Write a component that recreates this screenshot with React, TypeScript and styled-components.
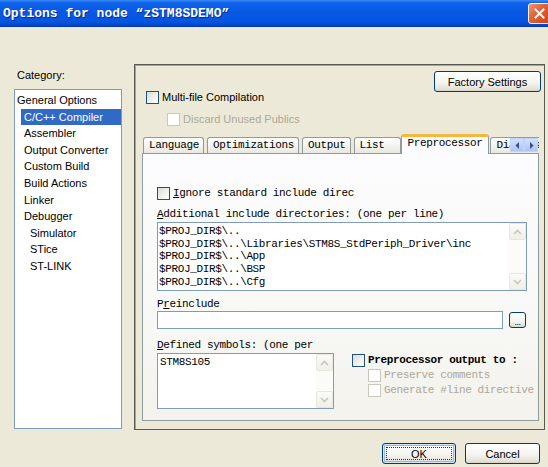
import React from "react";
import styled, { createGlobalStyle, css } from "styled-components";

const GlobalStyle = createGlobalStyle`
  html, body { margin: 0; padding: 0; background: #ece9d8; }
  body { font-family: "Liberation Sans", Arial, sans-serif; font-size: 11px; color: #000; }
  * { box-sizing: border-box; }
`;

const mono = css`
  font-family: "Liberation Mono", "Courier New", monospace;
  font-size: 11px;
  letter-spacing: -0.36px;
`;

const Window = styled.div`
  width: 548px;
  height: 467px;
  overflow: hidden;
  background: #ece9d8;
  display: flex;
  flex-direction: column;
`;

const TitleBar = styled.div`
  height: 27px;
  flex: none;
  display: flex;
  align-items: center;
  padding-left: 3px;
  background: linear-gradient(
    to bottom,
    #3d8bf7 0%,
    #0f63ea 10%,
    #0758e4 45%,
    #0555e2 80%,
    #0445c4 95%,
    #03359e 100%
  );
`;

const TitleText = styled.span`
  font-family: "Liberation Mono", "Courier New", monospace;
  font-weight: bold;
  font-size: 13px;
  letter-spacing: 0px;
  color: #fff;
  text-shadow: 1px 1px 0 #0a2a8c;
  white-space: pre;
`;

const CloseButton = styled.div`
  margin-left: auto;
  margin-right: -2px;
  width: 22px;
  height: 21px;
  border: 1px solid #f4f4f4;
  border-radius: 3px;
  background: linear-gradient(135deg, #f0967a 0%, #e2643b 40%, #c9441b 100%);
  display: flex;
  align-items: center;
  justify-content: center;
`;

const Main = styled.div`
  display: flex;
  gap: 12px;
  margin-top: 37px;
  padding-left: 14px;
  height: 366px;
  flex: none;
`;

const LeftColumn = styled.div`
  width: 108px;
  display: flex;
  flex-direction: column;
`;

const CategoryLabel = styled.div`
  margin-top: 5px;
  line-height: 13px;
  height: 13px;
  padding-left: 3px;
`;

const ListBox = styled.div`
  margin-top: 7px;
  height: 340px;
  border: 1px solid #7f9db9;
  background: #fff;
  padding-top: 2px;
`;

const ListItem = styled.div<{ $level: number; $selected?: boolean }>`
  height: 16.6px;
  line-height: 16.6px;
  margin-left: ${(p) => [0, 6, 12][p.$level]}px;
  padding-left: ${(p) => (p.$level === 0 ? 2 : 3)}px;
  white-space: nowrap;
  ${(p) =>
    p.$selected &&
    css`
      background: #316ac5;
      color: #fff;
    `}
`;

const Group = styled.div`
  width: 411px;
  height: 366px;
  border: 1px solid #5a5a55;
  box-shadow: inset 1px 1px 0 #a7a597;
  padding: 6px 5px 8px 7px;
  display: flex;
  flex-direction: column;
`;

const Header = styled.div`
  display: grid;
  grid-template-columns: 1fr auto;
  align-items: start;
`;

const HeaderChecks = styled.div`
  padding: 20px 0 0 4px;
  display: flex;
  flex-direction: column;
`;

const CheckRow = styled.label<{ $indent?: number; $top?: number; $disabled?: boolean }>`
  display: flex;
  align-items: center;
  gap: 3px;
  height: 13px;
  line-height: 13px;
  margin-left: ${(p) => p.$indent ?? 0}px;
  margin-top: ${(p) => p.$top ?? 0}px;
  color: ${(p) => (p.$disabled ? "#aca899" : "#000")};
  white-space: nowrap;
`;

const CheckBox = styled.span<{ $disabled?: boolean }>`
  width: 13px;
  height: 13px;
  flex: none;
  border: 1px solid ${(p) => (p.$disabled ? "#cac8bb" : "#1c5180")};
  background: ${(p) =>
    p.$disabled ? "#fff" : "linear-gradient(135deg, #dcdcd6 0%, #f2f2ee 60%, #ffffff 100%)"};
`;

const MonoText = styled.span<{ $bold?: boolean }>`
  ${mono}
  font-weight: ${(p) => (p.$bold ? "bold" : "normal")};
`;

const PushButton = styled.button<{ $w: number; $h: number; $default?: boolean }>`
  position: relative;
  width: ${(p) => p.$w}px;
  height: ${(p) => p.$h}px;
  padding: 0;
  border: 1px solid #003c74;
  border-radius: 3px;
  background: linear-gradient(to bottom, #ffffff 0%, #f5f4ef 55%, #e4e2d8 90%, #d6d0c5 100%);
  font-family: "Liberation Sans", Arial, sans-serif;
  font-size: 11px;
  color: #000;
  ${(p) =>
    p.$default &&
    css`
      box-shadow: inset 0 0 0 1px #cee7ff, inset 0 0 0 2px #98b8ea;
      &::after {
        content: "";
        position: absolute;
        inset: 3px;
        border: 1px dotted #333;
      }
    `}
`;

const FactoryButton = styled(PushButton)`
  margin-right: -2px;
`;

const TabStrip = styled.div`
  position: relative;
  z-index: 1;
  display: flex;
  align-items: flex-end;
  gap: 3px;
  height: 20px;
  margin-top: 8px;
  margin-bottom: -1px;
  padding-left: 1px;
  overflow: hidden;
  flex: none;
`;

const Tab = styled.div<{ $active?: boolean }>`
  ${mono}
  flex: none;
  min-width: 47px;
  height: 16px;
  margin-bottom: 1px;
  padding: 0 4px 0 5px;
  line-height: 15px;
  white-space: nowrap;
  border: 1px solid #919b9c;
  border-bottom: none;
  border-radius: 3px 3px 0 0;
  background: linear-gradient(to bottom, #ffffff 0%, #f4f4f0 50%, #e8e7e0 100%);
  ${(p) =>
    p.$active &&
    css`
      height: 20px;
      margin: 0 -2px 0 -3px;
      padding: 0 6px;
      line-height: 12px;
      border-top: 3px solid #f5b83c;
      background: #fcfcfe;
    `}
`;

const TabScroller = styled.div`
  position: absolute;
  right: 1px;
  top: 4px;
  display: flex;
`;

const TabScrollButton = styled.div`
  width: 14px;
  height: 14px;
  display: flex;
  align-items: center;
  justify-content: center;
  background: linear-gradient(to bottom, #d3e0fd 0%, #bccffb 60%, #aec4f6 100%);
  border: 1px solid #c2d3fa;
`;

const TabPage = styled.div`
  flex: 1;
  border: 1px solid #919b9c;
  background: linear-gradient(to bottom, #fcfcfe 0%, #f8f8f6 60%, #f3f2ec 100%);
  padding: 33px 0 0 14px;
  display: flex;
  flex-direction: column;
`;

const FieldLabel = styled.div<{ $top: number }>`
  ${mono}
  line-height: 12px;
  height: 12px;
  margin-top: ${(p) => p.$top}px;
  white-space: nowrap;
`;

const TextBox = styled.div<{ $w: number; $h: number; $top?: number }>`
  width: ${(p) => p.$w}px;
  height: ${(p) => p.$h}px;
  margin-top: ${(p) => p.$top ?? 0}px;
  border: 1px solid #7f9db9;
  background: #fff;
  display: flex;
  flex: none;
`;

const TextLines = styled.div<{ $padLeft?: number }>`
  ${mono}
  flex: 1;
  padding: 2px 0 0 ${(p) => p.$padLeft ?? 1}px;
  line-height: 12.7px;
  white-space: pre;
  overflow: hidden;
`;

const ScrollBar = styled.div`
  width: 17px;
  flex: none;
  display: flex;
  flex-direction: column;
  justify-content: space-between;
  background: #fbfbf8;
`;

const ScrollButton = styled.div`
  width: 17px;
  height: 17px;
  display: flex;
  align-items: center;
  justify-content: center;
  border: 1px solid #e8e7de;
  border-radius: 2px;
  background: linear-gradient(to bottom, #fbfbf8 0%, #f0efe8 100%);
`;

const InputRow = styled.div`
  display: flex;
  align-items: center;
  gap: 6px;
  margin-top: 1px;
`;

const TextInput = styled.div`
  width: 346px;
  height: 18px;
  border: 1px solid #7f9db9;
  background: #fff;
`;

const BrowseButton = styled(PushButton)`
  font-size: 9px;
  line-height: 10px;
  padding-top: 3px;
  letter-spacing: -0.5px;
`;

const BottomRow = styled.div`
  display: flex;
  margin-top: 2px;
`;

const OutputOptions = styled.div`
  margin-left: 18px;
  margin-top: 1px;
  display: flex;
  flex-direction: column;
  gap: 2px;
`;

const Footer = styled.div`
  display: flex;
  justify-content: flex-end;
  gap: 9px;
  margin-top: 13px;
  padding-right: 8px;
`;

const Chevron = ({ dir }: { dir: "up" | "down" }) => (
  <svg width="9" height="6" viewBox="0 0 9 6">
    <polyline
      points={dir === "up" ? "1,5 4.5,1.5 8,5" : "1,1 4.5,4.5 8,1"}
      fill="none"
      stroke="#c9c7ba"
      strokeWidth="1.6"
    />
  </svg>
);

const Triangle = ({ dir }: { dir: "left" | "right" }) => (
  <svg width="5" height="7" viewBox="0 0 5 7">
    <polygon points={dir === "left" ? "4,0 4,7 0.5,3.5" : "1,0 1,7 4.5,3.5"} fill="#3a4f7a" />
  </svg>
);

const DisabledScroll = () => (
  <ScrollBar>
    <ScrollButton>
      <Chevron dir="up" />
    </ScrollButton>
    <ScrollButton>
      <Chevron dir="down" />
    </ScrollButton>
  </ScrollBar>
);

const categories: { name: string; level: number; selected?: boolean }[] = [
  { name: "General Options", level: 0 },
  { name: "C/C++ Compiler", level: 1, selected: true },
  { name: "Assembler", level: 1 },
  { name: "Output Converter", level: 1 },
  { name: "Custom Build", level: 1 },
  { name: "Build Actions", level: 1 },
  { name: "Linker", level: 1 },
  { name: "Debugger", level: 1 },
  { name: "Simulator", level: 2 },
  { name: "STice", level: 2 },
  { name: "ST-LINK", level: 2 },
];

const tabs = ["Language", "Optimizations", "Output", "List", "Preprocessor", "Diagnostics"];

const includeDirs = [
  "$PROJ_DIR$\\..",
  "$PROJ_DIR$\\..\\Libraries\\STM8S_StdPeriph_Driver\\inc",
  "$PROJ_DIR$\\..\\App",
  "$PROJ_DIR$\\..\\BSP",
  "$PROJ_DIR$\\..\\Cfg",
];

export default function App() {
  return (
    <>
      <GlobalStyle />
      <Window>
        <TitleBar>
          <TitleText>Options for node “zSTM8SDEMO”</TitleText>
          <CloseButton>
            <svg width="11" height="11" viewBox="0 0 11 11">
              <path d="M1.5 1.5 L9.5 9.5 M9.5 1.5 L1.5 9.5" stroke="#fff" strokeWidth="2" strokeLinecap="square" />
            </svg>
          </CloseButton>
        </TitleBar>

        <Main>
          <LeftColumn>
            <CategoryLabel>Category:</CategoryLabel>
            <ListBox>
              {categories.map((c) => (
                <ListItem key={c.name} $level={c.level} $selected={c.selected}>
                  {c.name}
                </ListItem>
              ))}
            </ListBox>
          </LeftColumn>

          <Group>
            <Header>
              <HeaderChecks>
                <CheckRow>
                  <CheckBox />
                  Multi-file Compilation
                </CheckRow>
                <CheckRow $indent={21} $top={9} $disabled>
                  <CheckBox $disabled />
                  Discard Unused Publics
                </CheckRow>
              </HeaderChecks>
              <FactoryButton $w={107} $h={21}>
                Factory Settings
              </FactoryButton>
            </Header>

            <TabStrip>
              {tabs.map((t) => (
                <Tab key={t} $active={t === "Preprocessor"}>
                  {t}
                </Tab>
              ))}
              <TabScroller>
                <TabScrollButton>
                  <Triangle dir="left" />
                </TabScrollButton>
                <TabScrollButton>
                  <Triangle dir="right" />
                </TabScrollButton>
              </TabScroller>
            </TabStrip>

            <TabPage>
              <CheckRow>
                <CheckBox />
                <MonoText>
                  <u>I</u>gnore standard include direc
                </MonoText>
              </CheckRow>

              <FieldLabel $top={8}>
                <u>A</u>dditional include directories: (one per line)
              </FieldLabel>
              <TextBox $w={370} $h={69} $top={2}>
                <TextLines>{includeDirs.join("\n")}</TextLines>
                <DisabledScroll />
              </TextBox>

              <FieldLabel $top={7}>
                P<u>r</u>einclude
              </FieldLabel>
              <InputRow>
                <TextInput />
                <BrowseButton $w={17} $h={16}>
                  ...
                </BrowseButton>
              </InputRow>

              <FieldLabel $top={10}>
                <u>D</u>efined symbols: (one per
              </FieldLabel>
              <BottomRow>
                <TextBox $w={177} $h={56}>
                  <TextLines $padLeft={2}>STM8S105</TextLines>
                  <DisabledScroll />
                </TextBox>
                <OutputOptions>
                  <CheckRow>
                    <CheckBox />
                    <MonoText $bold>Preprocessor output to :</MonoText>
                  </CheckRow>
                  <CheckRow $indent={16} $disabled>
                    <CheckBox $disabled />
                    <MonoText>Preserve comments</MonoText>
                  </CheckRow>
                  <CheckRow $indent={16} $disabled>
                    <CheckBox $disabled />
                    <MonoText>Generate #line directive</MonoText>
                  </CheckRow>
                </OutputOptions>
              </BottomRow>
            </TabPage>
          </Group>
        </Main>

        <Footer>
          <PushButton $w={74} $h={21} $default>
            OK
          </PushButton>
          <PushButton $w={75} $h={21}>
            Cancel
          </PushButton>
        </Footer>
      </Window>
    </>
  );
}
